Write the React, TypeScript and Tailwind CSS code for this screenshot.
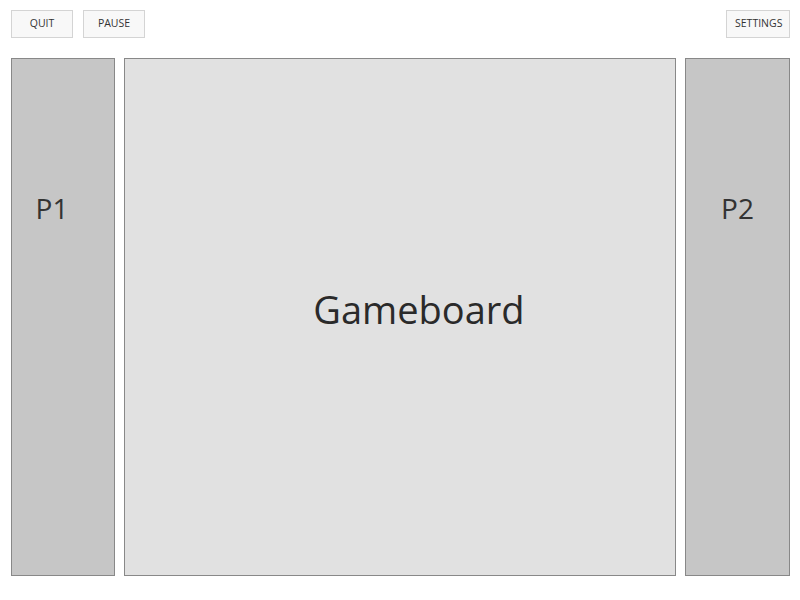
const btn =
  'h-[28px] px-2 border border-[#d4d4d4] bg-[#f8f8f8] text-[10.5px] text-[#333] uppercase';

export default function App() {
  return (
    <div className="w-[800px] h-[600px] bg-white pt-[10px] pl-[11px] pr-[10px] font-['Open_Sans',sans-serif]">
      <div className="flex items-start justify-between h-[28px]">
        <div className="flex gap-[10px]">
          <button className={`${btn} w-[62px]`}>Quit</button>
          <button className={`${btn} w-[62px]`}>Pause</button>
        </div>
        <button className={`${btn} w-[64px]`}>Settings</button>
      </div>

      <div className="flex gap-[9px] mt-[20px] h-[518px]">
        <div className="w-[104px] border border-[#888] bg-[#c6c6c6] pt-[130px] pr-[22px] text-center">
          <span className="text-[28px] leading-[38px] text-[#333]">P1</span>
        </div>
        <div className="flex-1 border border-[#888] bg-[#e1e1e1] flex items-center justify-center pl-[38px] pb-[16px]">
          <span className="text-[38px] leading-[50px] text-[#2a2a2a]">Gameboard</span>
        </div>
        <div className="w-[105px] border border-[#888] bg-[#c6c6c6] pt-[130px] text-center">
          <span className="text-[28px] leading-[38px] text-[#333]">P2</span>
        </div>
      </div>
    </div>
  );
}
